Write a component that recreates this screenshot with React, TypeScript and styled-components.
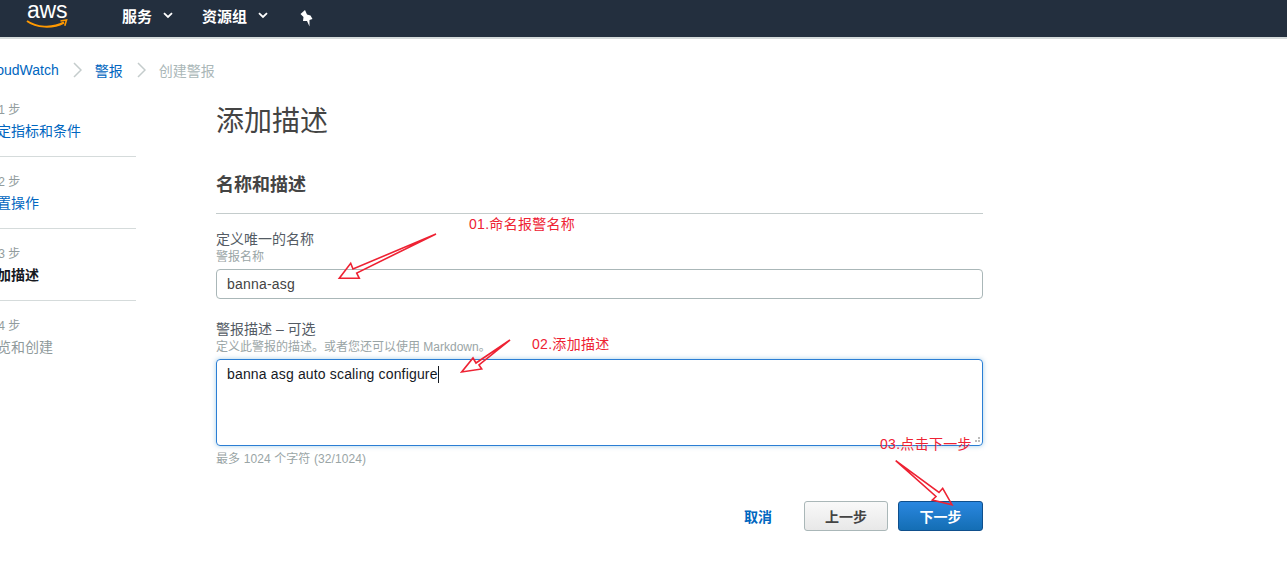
import React from 'react';
import styled, { createGlobalStyle } from 'styled-components';

const FONT = `"Liberation Sans", "Noto Sans CJK SC", sans-serif`;

const GlobalStyle = createGlobalStyle`
  html, body {
    margin: 0;
    padding: 0;
    background: #fff;
    overflow: hidden;
    font-family: ${FONT};
  }
`;

const Screen = styled.div`
  position: relative;
  width: 1287px;
  height: 582px;
  overflow: hidden;
`;

const TopBar = styled.header`
  height: 37px;
  background: #232f3e;
  border-bottom: 2px solid #d5dbdb;
  display: flex;
  align-items: center;
  color: #fff;
`;

const Logo = styled.div`
  position: relative;
  width: 44px;
  height: 37px;
  margin-left: 26px;
  margin-right: 52px;
`;

const LogoWord = styled.span`
  position: absolute;
  left: 1px;
  top: -3px;
  font-size: 23px;
  line-height: 26px;
  letter-spacing: -0.2px;
  color: #fff;
`;

const LogoSmile = styled.svg`
  position: absolute;
  left: 0;
  top: 19px;
`;

const NavItem = styled.div<{ $w: number }>`
  width: ${p => p.$w}px;
  display: flex;
  align-items: center;
  gap: 11px;
  font-size: 15px;
  font-weight: 700;
  margin-top: -6px;
`;

const Pin = styled.svg`
  margin: -2px 0 0 -3px;
`;

const Crumbs = styled.nav`
  height: 61px;
  display: flex;
  align-items: center;
  margin-left: -17px;
  font-size: 14px;
  color: #aab7b8;
`;

const CrumbLink = styled.a`
  color: #0066c0;
`;

const CrumbSep = styled.svg`
  margin: 0 13px 0 14px;
`;

const Columns = styled.div`
  display: flex;
  margin-left: -17px;
`;

const Sidebar = styled.aside`
  width: 153px;
  flex: none;
  margin-top: -15px;
`;

const Step = styled.div<{ $last?: boolean }>`
  height: 72px;
  box-sizing: border-box;
  padding-top: 17px;
  border-bottom: ${p => (p.$last ? 'none' : '1px solid #d5dbdb')};
`;

const StepNo = styled.div`
  font-size: 12px;
  line-height: 16px;
  color: #929c9d;
`;

const StepName = styled.div<{ $state: 'link' | 'current' | 'off' }>`
  margin-top: 3px;
  font-size: 14px;
  line-height: 20px;
  color: ${p => (p.$state === 'link' ? '#0066c0' : p.$state === 'current' ? '#16191f' : '#8f9a9b')};
  font-weight: ${p => (p.$state === 'current' ? 700 : 400)};
`;

const Main = styled.main`
  width: 767px;
  margin-left: 80px;
  margin-top: 2px;
  color: #444;
`;

const Title = styled.h1`
  margin: 0;
  font-size: 28px;
  line-height: 40px;
  font-weight: 400;
  color: #444;
`;

const Section = styled.h2`
  margin: 30px 0 0;
  padding-bottom: 15px;
  border-bottom: 1px solid #c4cccc;
  font-size: 18px;
  line-height: 26px;
  font-weight: 700;
  color: #444;
`;

const Field = styled.div<{ $top: number }>`
  margin-top: ${p => p.$top}px;
`;

const Label = styled.div`
  font-size: 14px;
  line-height: 19px;
  color: #545b64;
`;

const Hint = styled.div`
  font-size: 12px;
  line-height: 16px;
  color: #9aa5a6;
`;

const TextInput = styled.input`
  display: block;
  box-sizing: border-box;
  width: 100%;
  height: 30px;
  margin-top: 4px;
  padding: 0 10px;
  border: 1px solid #aab7b8;
  border-radius: 4px;
  outline: none;
  font-family: ${FONT};
  font-size: 14px;
  letter-spacing: 0.2px;
  color: #444;
`;

const TextBox = styled.div`
  position: relative;
  box-sizing: border-box;
  width: 100%;
  height: 87px;
  margin-top: 4px;
  padding: 5px 10px;
  border: 1px solid #2b7ed4;
  border-radius: 4px;
  box-shadow: 0 0 5px rgba(0, 115, 187, 0.35);
  font-size: 14px;
  line-height: 18px;
  letter-spacing: 0.16px;
  color: #16191f;
`;

const Caret = styled.span`
  display: inline-block;
  width: 1px;
  height: 17px;
  background: #16191f;
  vertical-align: -4px;
`;

const Grip = styled.svg`
  position: absolute;
  right: 1px;
  bottom: 1px;
`;

const Counter = styled(Hint)`
  margin-top: 5px;
  letter-spacing: 0.1px;
`;

const Actions = styled.div`
  display: flex;
  align-items: center;
  justify-content: flex-end;
  margin-top: 34px;
`;

const Cancel = styled.a`
  margin-right: 32px;
  font-size: 14px;
  font-weight: 700;
  color: #0066c0;
`;

const Button = styled.button<{ $primary?: boolean }>`
  box-sizing: border-box;
  height: 30px;
  width: ${p => (p.$primary ? 85 : 84)}px;
  margin-left: ${p => (p.$primary ? 10 : 0)}px;
  border-radius: 3px;
  border: 1px solid ${p => (p.$primary ? '#0f4f8c' : '#aab7b8')};
  background: ${p =>
    p.$primary ? 'linear-gradient(#2a87e0, #146eb4)' : 'linear-gradient(#f9f9f9, #e8e8e8)'};
  color: ${p => (p.$primary ? '#fff' : '#444')};
  font-family: ${FONT};
  font-size: 14px;
  font-weight: 700;
  padding: 0;
`;

const Arrows = styled.svg`
  position: absolute;
  left: 0;
  top: 0;
  pointer-events: none;
`;

const Note = styled.span<{ $x: number; $y: number }>`
  position: absolute;
  left: ${p => p.$x}px;
  top: ${p => p.$y}px;
  font-size: 14px;
  line-height: 18px;
  letter-spacing: 0.3px;
  color: #ee2233;
  white-space: nowrap;
`;

const steps: { no: string; name: string; state: 'link' | 'current' | 'off' }[] = [
  { no: '第 1 步', name: '指定指标和条件', state: 'link' },
  { no: '第 2 步', name: '配置操作', state: 'link' },
  { no: '第 3 步', name: '添加描述', state: 'current' },
  { no: '第 4 步', name: '预览和创建', state: 'off' },
];

const arrowPaths = [
  'M436 234 L353 269 L350.7 263.3 L339.3 278.3 L359.3 278.3 L356.7 273 Z',
  'M510 340 L476 363 L473 358 L461.7 372 L481.7 369 L479 365 Z',
  'M895.7 460.7 L939 492.5 L942.7 488.3 L952 504.7 L932.3 500 L936 496.5 Z',
];

const Chevron = () => (
  <svg width="10" height="7" viewBox="0 0 10 7">
    <path d="M1 1.2 L5 5 L9 1.2" fill="none" stroke="#fff" strokeWidth="1.8" />
  </svg>
);

const Sep = () => (
  <CrumbSep width="9" height="16" viewBox="0 0 9 16">
    <path d="M1 1 L8 8 L1 15" fill="none" stroke="#c4cccc" strokeWidth="1.5" />
  </CrumbSep>
);

export default function App() {
  return (
    <Screen>
      <GlobalStyle />
      <TopBar>
        <Logo>
          <LogoWord>aws</LogoWord>
          <LogoSmile width="42" height="12" viewBox="0 0 42 12">
            <path d="M1 2 C10 8.5 26 10 38 3.5" fill="none" stroke="#f90" strokeWidth="2" />
            <path d="M34.5 2 L40.5 1 L38.8 6.8" fill="none" stroke="#f90" strokeWidth="1.6" />
          </LogoSmile>
        </Logo>
        <NavItem $w={80}>服务 <Chevron /></NavItem>
        <NavItem $w={100}>资源组 <Chevron /></NavItem>
        <Pin width="15" height="18" viewBox="0 0 15 18">
          <path d="M6 1 L1.5 5 L4.5 8 L4 12 L8 12 L10.5 17.5 L10.5 11 L13.5 10 L11.5 6.5 L8 5.5 Z" fill="#fff" />
        </Pin>
      </TopBar>
      <Crumbs>
        <CrumbLink>CloudWatch</CrumbLink>
        <Sep />
        <CrumbLink>警报</CrumbLink>
        <Sep />
        创建警报
      </Crumbs>
      <Columns>
        <Sidebar>
          {steps.map((s, i) => (
            <Step key={s.no} $last={i === steps.length - 1}>
              <StepNo>{s.no}</StepNo>
              <StepName $state={s.state}>{s.name}</StepName>
            </Step>
          ))}
        </Sidebar>
        <Main>
          <Title>添加描述</Title>
          <Section>名称和描述</Section>
          <Field $top={16}>
            <Label>定义唯一的名称</Label>
            <Hint>警报名称</Hint>
            <TextInput defaultValue="banna-asg" />
          </Field>
          <Field $top={21}>
            <Label>警报描述 – 可选</Label>
            <Hint>定义此警报的描述。或者您还可以使用 Markdown。</Hint>
            <TextBox>
              banna asg auto scaling configure<Caret />
              <Grip width="8" height="8" viewBox="0 0 8 8">
                <path d="M5 1h2v2H5zM2 4h2v2H2zM5 4h2v2H5z" fill="#bbb" />
              </Grip>
            </TextBox>
            <Counter>最多 1024 个字符 (32/1024)</Counter>
          </Field>
          <Actions>
            <Cancel>取消</Cancel>
            <Button>上一步</Button>
            <Button $primary>下一步</Button>
          </Actions>
        </Main>
      </Columns>
      <Arrows width="1287" height="582" viewBox="0 0 1287 582">
        {arrowPaths.map(d => (
          <path key={d} d={d} fill="none" stroke="#ee2233" strokeWidth="1.6" />
        ))}
      </Arrows>
      <Note $x={469} $y={215}>01.命名报警名称</Note>
      <Note $x={532} $y={335}>02.添加描述</Note>
      <Note $x={880} $y={435}>03.点击下一步</Note>
    </Screen>
  );
}
